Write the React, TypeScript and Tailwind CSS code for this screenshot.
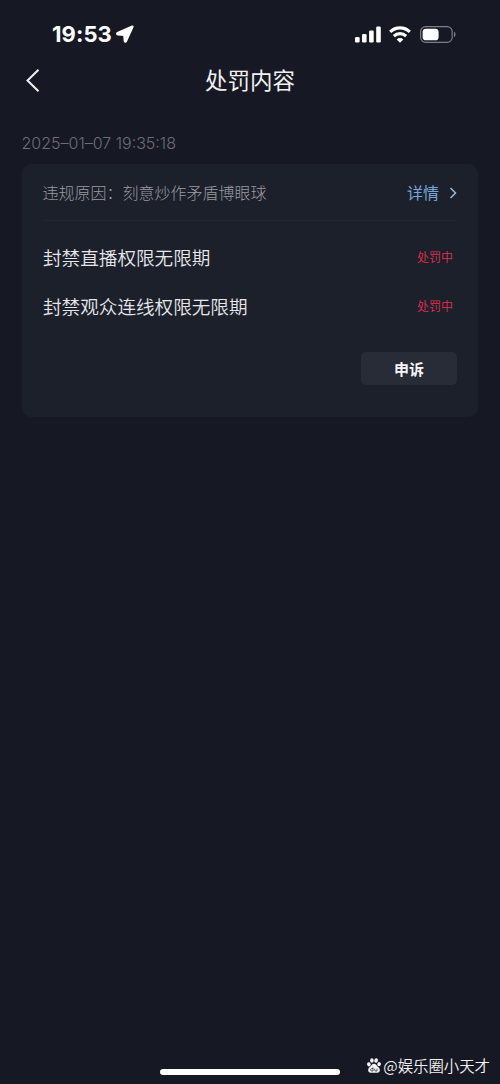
const penalties = [
  { name: '封禁直播权限无限期', status: '处罚中' },
  { name: '封禁观众连线权限无限期', status: '处罚中' },
];

function StatusBar() {
  return (
    <div className="flex h-[58px] items-center justify-between pt-[10px] pl-[52px] pr-[44px] text-white">
      <div className="flex items-center gap-[4px]">
        <span className="font-[Inter,sans-serif] text-[22px] leading-none font-bold tracking-[0.1px]">19:53</span>
        <svg className="h-[18px] w-[18px]" viewBox="0 0 18 18" fill="currentColor" stroke="currentColor" strokeWidth="1.8" strokeLinejoin="round">
          <path d="M16.300 1.400 1.500 7.900c-.8.4-.6 1.600.3 1.700l6.300.5.500 6.100c.1.900 1.100 1 1.500.2L16.700 1.800c.1-.3-.1-.5-.4-.4Z" />
        </svg>
      </div>
      <div className="flex items-center">
        <svg className="h-[17px] w-[26px]" viewBox="0 0 26 17" fill="currentColor">
          <rect x="0" y="11" width="4.6" height="5.5" rx="1.2" />
          <rect x="7" y="8" width="4.6" height="8.5" rx="1.2" />
          <rect x="14.1" y="4.5" width="4.6" height="12" rx="1.2" />
          <rect x="21.2" y="0.5" width="4.6" height="16" rx="1.2" />
        </svg>
        <svg className="ml-[8px] h-[17px] w-[22px]" viewBox="0 0 22 17" fill="none" stroke="currentColor" strokeWidth="3.2">
          <path d="M1.2 5.9a14.1 14.1 0 0 1 19.6 0" />
          <path d="M4.9 10.1a8.8 8.8 0 0 1 12.2 0" />
          <path d="m11 16.7-3.3-3.3a4.7 4.7 0 0 1 6.6 0Z" fill="currentColor" stroke="none" />
        </svg>
        <svg className="ml-[9px] h-[17px] w-[36px]" viewBox="0 0 36 17" fill="none">
          <rect x="0.6" y="0.7" width="31.6" height="15.6" rx="5" stroke="#7d7f88" strokeWidth="1.2" />
          <rect x="2.6" y="2.7" width="16" height="11.6" rx="3.4" fill="#fff" />
          <path d="M34 5.8c2 .8 2 4.6 0 5.4Z" fill="#7d7f88" />
        </svg>
      </div>
    </div>
  );
}

function BaiduPaw() {
  return (
    <svg className="h-[15px] w-[14px]" viewBox="0 0 14 15" fill="#f3f3f5">
      <ellipse cx="1.9" cy="6.4" rx="1.8" ry="2.1" transform="rotate(-12 1.9 6.4)" />
      <ellipse cx="4.9" cy="2.5" rx="1.8" ry="2.3" />
      <ellipse cx="9.1" cy="2.5" rx="1.8" ry="2.3" transform="rotate(8 9.1 2.5)" />
      <ellipse cx="12.1" cy="6.2" rx="1.8" ry="2.1" transform="rotate(12 12.1 6.2)" />
      <path d="M7 5.800c1.900 0 2.500 1.800 3.800 3 1.400 1.200 2.300 2 2 3.900-.4 2-2.600 2.200-5.800 2-3.200.2-5.400 0-5.800-2-.3-1.900.6-2.700 2-3.900C4.500 7.600 5.100 5.800 7 5.800Z" />
      <path d="M6 9.300v3.700H4.700c-1.500 0-1.500-2.300 0-2.300H6M7.700 10.700v1.600c0 .5.300.7.800.7H10v-2.300" fill="none" stroke="#181a25" strokeWidth="0.7" />
    </svg>
  );
}

export default function App() {
  return (
    <div className="flex h-[1084px] w-[500px] flex-col overflow-hidden bg-[#161823] font-['Noto_Sans_CJK_SC',sans-serif]">
      <StatusBar />

      <header className="grid h-[44px] grid-cols-[1fr_auto_1fr] items-center text-[#f0f0f3]">
        <svg className="ml-[25px] h-[24px] w-[15px]" viewBox="0 0 15 24" fill="none" stroke="currentColor" strokeWidth="2">
          <path d="M13.5 1.7 2.5 12.5l11 10.8" />
        </svg>
        <h1 className="-mt-[2px] text-[22.5px] leading-none font-normal">处罚内容</h1>
      </header>

      <main className="flex flex-col px-[22px] pt-[30px]">
        <time className="-ml-[0.5px] font-[Inter,sans-serif] text-[16px] leading-[22px] font-light text-[#6c6e77]">
          2025–01–07 19:35:18
        </time>

        <section className="mt-[10px] flex h-[253px] flex-col rounded-[9px] bg-[#1c202a] px-[21px]">
          <div className="flex h-[57px] items-center justify-between border-b border-[#222630] text-[16px]">
            <span className="-ml-[0.5px] font-light text-[#9a9ba1]">违规原因：刻意炒作矛盾博眼球</span>
            <button className="flex items-center gap-[10px] text-[#77a6dc]">
              详情
              <svg className="mt-[2px] h-[12px] w-[8px]" viewBox="0 0 8 12" fill="none" stroke="#9ab7da" strokeWidth="1.5">
                <path d="m1.5 1 5 5-5 5" />
              </svg>
            </button>
          </div>

          <ul className="flex flex-col pt-[12px]">
            {penalties.map((item) => (
              <li key={item.name} className="flex h-[49px] items-center justify-between pr-[4px]">
                <span className="text-[18.6px] leading-none font-[350] text-[#e6e6ea]">{item.name}</span>
                <span className="-mt-[2px] text-[12px] leading-none font-[350] text-[#e02f53]">{item.status}</span>
              </li>
            ))}
          </ul>

          <button className="mt-[21px] flex h-[33px] w-[96px] items-center justify-center self-end rounded-[5px] bg-[#282c36] text-[15px] leading-none font-bold text-[#f5f5f7]">
            申诉
          </button>
        </section>
      </main>

      <footer className="mt-auto grid grid-cols-[160px_180px_1fr] items-end pb-[6px]">
        <div className="col-start-2 mb-[3px] h-[6px] rounded-full bg-white" />
        <div className="mr-[10px] flex items-center justify-end gap-[2px] pb-[2px] text-[#f1f1f3]">
          <BaiduPaw />
          <span className="text-[15.4px] leading-[22px] font-[350] whitespace-nowrap">@娱乐圈小天才</span>
        </div>
      </footer>
    </div>
  );
}
